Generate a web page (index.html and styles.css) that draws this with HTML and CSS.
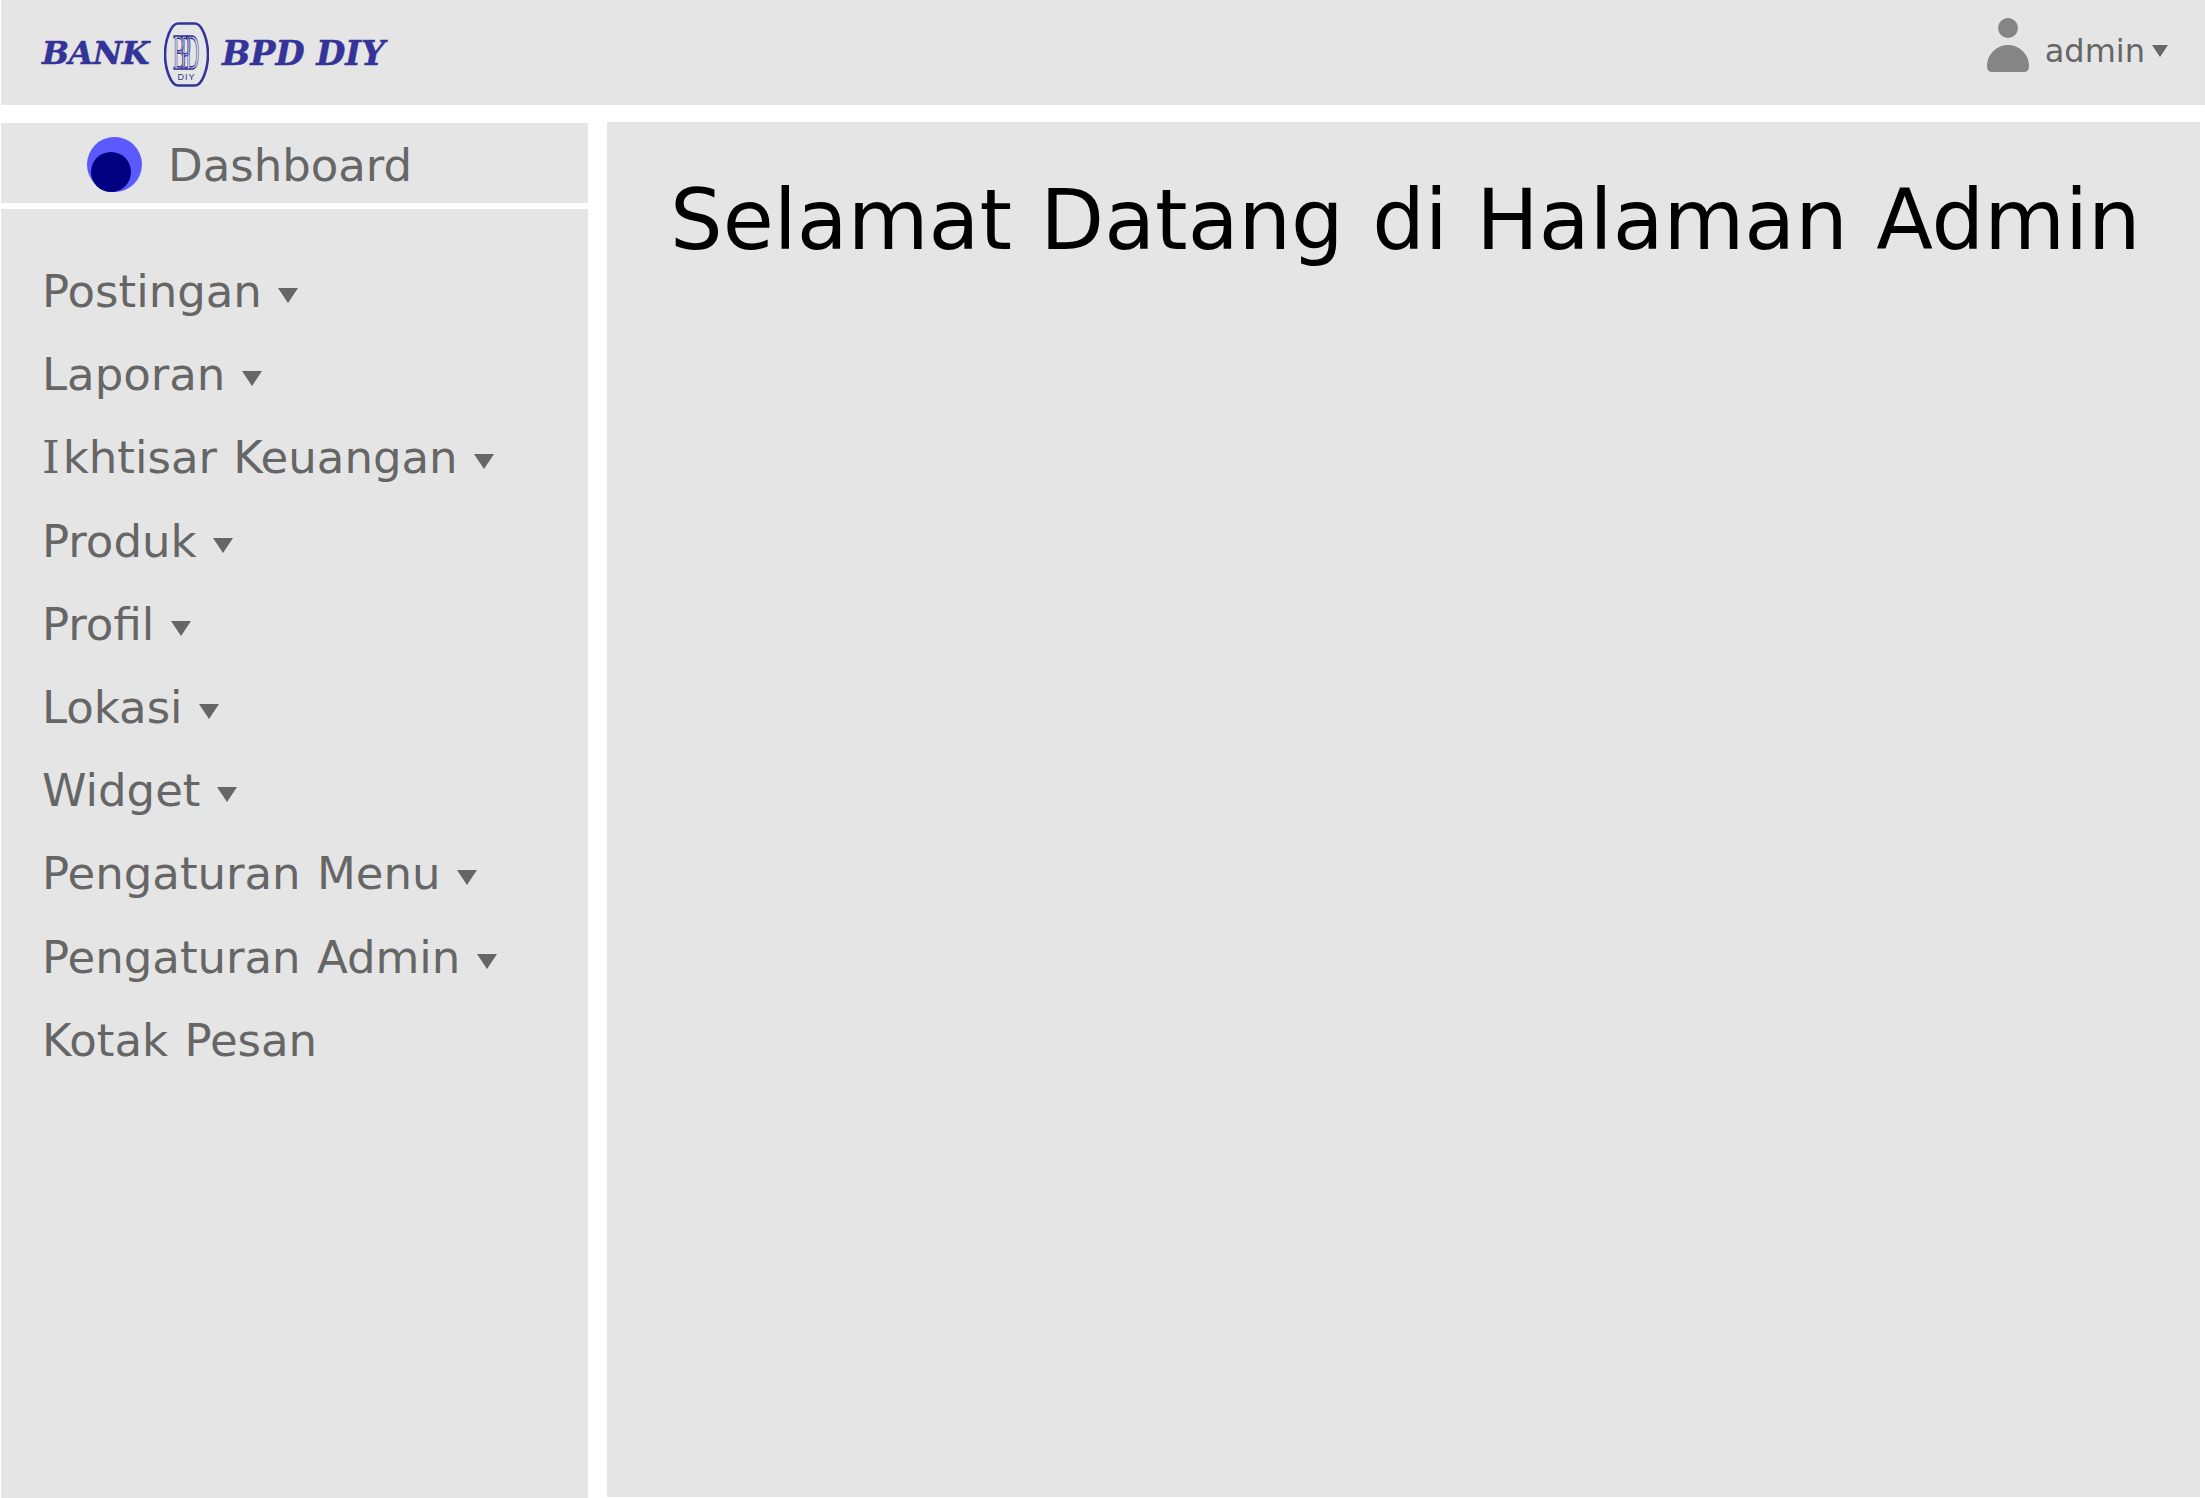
FILE: index.html
```html
<!DOCTYPE html>
<html lang="en">
<head>
    <meta charset="UTF-8">
    <meta name="viewport" content="width=device-width, initial-scale=1.0">
    <title>Halaman Admin</title>
    <link rel="stylesheet" href="styles.css">
</head>
<body>

<!-- Top bar -->
<header class="topbar">
    <div class="logo">
        <span class="logo-text logo-bank">BANK</span>
        <svg class="logo-mark" viewBox="0 0 45 65" width="45" height="65">
            <path d="M14 1.5 H31 C38 1.5 44 18 44 32.5 C44 47 38 63.5 31 63.5 H14 C7 63.5 1 47 1 32.5 C1 18 7 1.5 14 1.5 Z" fill="none" stroke="#333399" stroke-width="2.6"/>
            <text class="mono" transform="translate(9 47) scale(0.38 1)">BPD</text>
            <text class="mono-small" x="22.5" y="58" text-anchor="middle">DIY</text>
        </svg>
        <span class="logo-text logo-name">BPD DIY</span>
    </div>
    <div class="user">
        <svg class="user-icon" viewBox="0 0 42 54" width="42" height="54">
            <circle cx="21" cy="10" r="10" fill="#858585"/>
            <path d="M21 27 C33 27 42 37 42 48 C42 52 40 54 36 54 H6 C2 54 0 52 0 48 C0 37 9 27 21 27 Z" fill="#858585"/>
        </svg>
        <span class="user-name">admin</span>
        <span class="caret caret-small"></span>
    </div>
</header>

<div class="layout">
    <!-- Sidebar -->
    <aside class="sidebar">
        <div class="dash">
            <span class="dash-icon"><span class="dash-icon-inner"></span></span>
            <span class="dash-label">Dashboard</span>
        </div>
        <ul class="menu">
            <li>Postingan <span class="caret"></span></li>
            <li>Laporan <span class="caret"></span></li>
            <li><span class="serif-i">I</span>khtisar Keuangan <span class="caret"></span></li>
            <li>Produk <span class="caret"></span></li>
            <li>Profil <span class="caret"></span></li>
            <li>Lokasi <span class="caret"></span></li>
            <li>Widget <span class="caret"></span></li>
            <li>Pengaturan Menu <span class="caret"></span></li>
            <li>Pengaturan Admin <span class="caret"></span></li>
            <li>Kotak Pesan</li>
        </ul>
    </aside>

    <!-- Main content -->
    <main class="content">
        <h1>Selamat Datang di Halaman Admin</h1>
    </main>
</div>

</body>
</html>
```

FILE: styles.css
```css
html, body {
    margin: 0;
    height: 100%;
    overflow: hidden;
}
body {
    background-color: #fff;
    font-family: "DejaVu Sans", sans-serif;
    color: #666;
    padding-left: 1px;
    box-sizing: border-box;
}
.topbar {
    height: 105px;
    background-color: #e5e5e5;
    display: flex;
    justify-content: space-between;
    align-items: flex-start;
    padding-left: 41px;
    padding-right: 37px;
}
.logo {
    display: flex;
    align-items: center;
    margin-top: 22px;
}
.logo-text {
    font-family: "DejaVu Serif", serif;
    font-weight: bold;
    font-style: italic;
    -webkit-text-stroke: 0.5px #333399;
    color: #333399;
    white-space: nowrap;
    margin-top: -3px;
}
.logo-bank {
    font-size: 32px;
    letter-spacing: -0.5px;
    margin-right: 15px;
}
.logo-name {
    font-size: 33.5px;
    margin-left: 13px;
}
.logo-mark {
    display: block;
}
.mono {
    font-family: "Liberation Serif", serif;
    font-size: 50px;
    letter-spacing: -14px;
    fill: none;
    stroke: #333399;
    stroke-width: 1;
    vector-effect: non-scaling-stroke;
}
.mono-small {
    font-family: "Liberation Sans", sans-serif;
    font-size: 9px;
    letter-spacing: 1px;
    fill: #333399;
}
.user {
    display: flex;
    align-items: center;
    margin-top: 18px;
}
.user-icon {
    display: block;
    margin-right: 16px;
}
.user-name {
    font-size: 32px;
    margin-right: 7px;
    margin-top: 12px;
}
.layout {
    display: flex;
    align-items: flex-start;
    gap: 19px;
    margin-top: 17px;
}
.sidebar {
    width: 587px;
    height: 1376px;
    flex-shrink: 0;
    padding-top: 1px;
    box-sizing: border-box;
}
.dash {
    height: 80px;
    background-color: #e5e5e5;
    display: flex;
    align-items: center;
    padding-left: 86px;
    box-sizing: border-box;
}
.dash-icon {
    width: 55px;
    height: 55px;
    border-radius: 50%;
    background-color: #5a5aff;
    position: relative;
    margin-top: 3px;
    margin-right: 26px;
}
.dash-icon-inner {
    position: absolute;
    left: 4px;
    bottom: 0;
    width: 40px;
    height: 40px;
    border-radius: 50%;
    background-color: #000080;
}
.dash-label {
    font-size: 45px;
    margin-top: 5px;
}
.menu {
    list-style: none;
    margin: 6px 0 0;
    padding: 41px 0 0 41px;
    background-color: #e5e5e5;
    height: 1289px;
    box-sizing: border-box;
}
.menu li {
    font-size: 45px;
    height: 83.2px;
    line-height: 83.2px;
    white-space: nowrap;
    word-spacing: 2px;
}
.serif-i {
    font-family: "DejaVu Serif", serif;
    letter-spacing: 3px;
}
.caret {
    display: inline-block;
    width: 0;
    height: 0;
    border-left: 10px solid transparent;
    border-right: 10px solid transparent;
    border-top: 15px solid #666;
    vertical-align: 4px;
}
.caret-small {
    border-left-width: 8px;
    border-right-width: 8px;
    border-top-width: 12px;
    margin-top: 12px;
}
.content {
    width: 1593px;
    height: 1375px;
    background-color: #e5e5e5;
    padding-left: 63px;
    box-sizing: border-box;
}
.content h1 {
    margin: 0;
    padding-top: 50px;
    font-size: 83px;
    font-weight: normal;
    word-spacing: 2px;
    color: #000;
    white-space: nowrap;
}
```
